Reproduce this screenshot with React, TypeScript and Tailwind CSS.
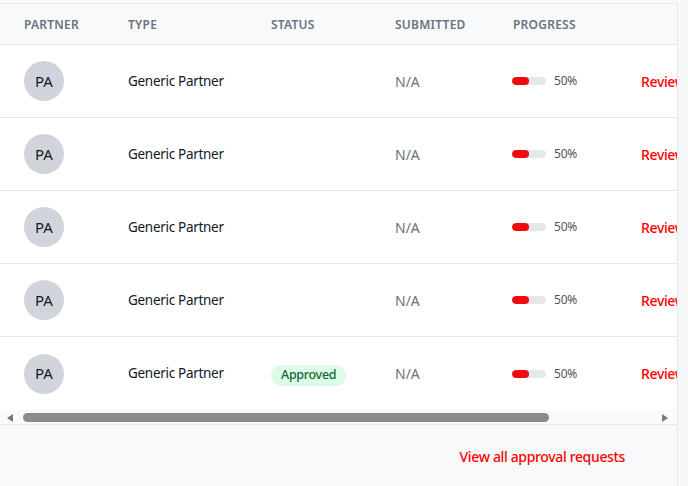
import React from "react";

const font = { fontFamily: '"Noto Sans", "Open Sans", sans-serif' };

const rows = [
  { status: "" },
  { status: "" },
  { status: "" },
  { status: "" },
  { status: "Approved" },
];

const cols = "grid grid-cols-[104px_143px_124px_118px_128px_140px]";

export default function App() {
  return (
    <div className="w-[688px] h-[486px] bg-[#f7f8fa] overflow-hidden pt-[3px]" style={font}>
      <div className="w-[678px] h-[483px] bg-white border-t border-r border-[#e5e7eb] flex flex-col overflow-hidden">
        <div className="overflow-hidden">
          <div className="w-[757px]">
            <div className={`${cols} h-[41px] items-center bg-[#f8f9fb] border-b border-[#e5e7eb] pt-[2px]`}>
              {["Partner", "Type", "Status", "Submitted", "Progress", ""].map((h, i) => (
                <div key={i} className="pl-6 text-[12px] font-semibold uppercase tracking-[0.02em] text-[#6b7280]">
                  {h}
                </div>
              ))}
            </div>
            {rows.map((r, i) => (
              <div
                key={i}
                className={`${cols} items-center h-[73px] ${i < rows.length - 1 ? "border-b border-[#e5e7eb]" : ""}`}
              >
                <div className="pl-6">
                  <div className="w-10 h-10 rounded-full bg-[#d1d5db] flex items-center justify-center text-[15px] text-[#111827]">
                    PA
                  </div>
                </div>
                <div className="pl-6 text-[13.5px] tracking-[-0.3px] text-[#111827]">Generic Partner</div>
                <div className="pl-6">
                  {r.status && (
                    <span className="inline-flex items-center h-[21px] px-[10px] rounded-full bg-[#dcfce7] text-[12.5px] tracking-[-0.3px] font-medium text-[#166534]">
                      {r.status}
                    </span>
                  )}
                </div>
                <div className="pl-6 text-[14px] text-[#6b7280]">N/A</div>
                <div className="pl-[23px] flex items-center gap-2">
                  <div className="w-[34px] h-2 rounded-full bg-[#e5e7eb] overflow-hidden">
                    <div className="h-full rounded-full bg-[#ef0c0c]" style={{ width: "50%" }} />
                  </div>
                  <span className="text-[12px] tracking-[-0.2px] text-[#4b5563]">50%</span>
                </div>
                <div className="pl-6 text-[14px] tracking-[-0.35px] font-medium text-[#ff0000]">Review</div>
              </div>
            ))}
          </div>
        </div>
        <div className="h-[15px] bg-[#fafafa] flex items-center relative border-b border-[#e5e7eb]">
          <svg className="absolute left-[7px] top-[4px]" width="6" height="8" viewBox="0 0 6 8">
            <path d="M6 0 L0 4 L6 8 Z" fill="#7a7a7a" />
          </svg>
          <div className="absolute left-[23px] top-[3px] w-[526px] h-[9px] rounded-full bg-[#8b8b8b]" />
          <svg className="absolute left-[662px] top-[4px]" width="6" height="8" viewBox="0 0 6 8">
            <path d="M0 0 L6 4 L0 8 Z" fill="#7a7a7a" />
          </svg>
        </div>
        <div className="flex-1 bg-[#f8f9fb] flex justify-end pr-[52px] pt-[22px]">
          <a className="text-[14px] tracking-[-0.35px] font-medium text-[#ff0000] h-5 leading-5">View all approval requests</a>
        </div>
      </div>
    </div>
  );
}
